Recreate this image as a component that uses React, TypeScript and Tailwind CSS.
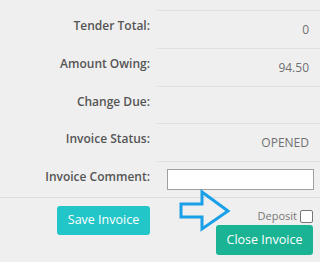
import React from "react";

const rows: { label: string; value?: string; h: string }[] = [
  { label: "Tender Total:", value: "0", h: "h-[38px]" },
  { label: "Amount Owing:", value: "94.50", h: "h-[38px]" },
  { label: "Change Due:", value: "", h: "h-[37px]" },
  { label: "Invoice Status:", value: "OPENED", h: "h-[38px]" },
];

export default function App() {
  return (
    <div
      className="relative w-[320px] h-[262px] overflow-hidden bg-[#efefef]"
      style={{ fontFamily: '"Open Sans", "Liberation Sans", sans-serif' }}
    >
      <div className="h-[10px]" />
      {rows.map((r) => (
        <div key={r.label} className={`flex ${r.h}`}>
          <div className="w-[157px] shrink-0 pr-[7px] pt-[7px] text-right text-[12px] font-semibold leading-[18px] text-[#555555]">
            {r.label}
          </div>
          <div className="flex-1 border-t border-[#e0e0e0] flex items-center justify-end pr-[11px] text-[12px] text-[#707070]">
            {r.value}
          </div>
        </div>
      ))}
      <div className="flex h-[36px]">
        <div className="w-[157px] shrink-0 pr-[7px] pt-[7px] text-right text-[12px] font-semibold leading-[18px] text-[#555555]">
          Invoice Comment:
        </div>
        <div className="flex-1 border-t border-[#e0e0e0] pl-[10px] pr-[6px] pt-[7px]">
          <input
            type="text"
            className="block w-full h-[21px] bg-white border border-[#a0a0a0] outline-none"
          />
        </div>
      </div>
      <div className="border-t border-[#dcdcdc] flex">
        <div className="w-[157px] shrink-0 flex justify-end pr-[7px] pt-[8px]">
          <button className="w-[93px] h-[29px] rounded-[3px] bg-[#23c6c8] text-white text-[12.5px]">
            Save Invoice
          </button>
        </div>
        <div className="flex-1 flex flex-col items-end pr-[7px] pt-[11px]">
          <label className="flex items-center gap-[3px] text-[11px] leading-[14px] text-[#777]">
            Deposit
            <span className="w-[13px] h-[13px] rounded-[2px] border border-[#767676] bg-white inline-block" />
          </label>
          <button className="mt-[2px] w-[97px] h-[30px] rounded-[3px] bg-[#1ab394] text-white text-[12.5px]">
            Close Invoice
          </button>
        </div>
      </div>
      <svg
        className="absolute left-[176px] top-[187px]"
        width="58"
        height="48"
        viewBox="176 187 58 48"
      >
        <polygon
          points="181,204 202,204 202,192 228,211 202,229 202,217 181,217"
          fill="none"
          stroke="#1aa0e8"
          strokeWidth="3"
          strokeLinejoin="miter"
        />
      </svg>
    </div>
  );
}
